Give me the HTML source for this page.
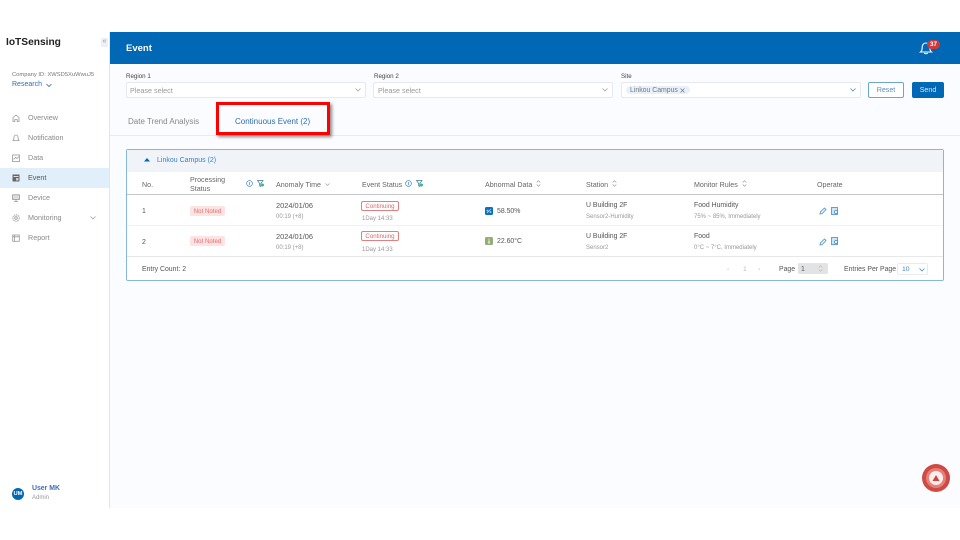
<!DOCTYPE html>
<html lang="en"><head><meta charset="utf-8"><title>IoTSensing Event</title>
<style>
html,body{margin:0;padding:0;background:#fff}
body{width:960px;height:540px;position:relative;overflow:hidden;font-family:"Liberation Sans",sans-serif;color:#555}
#w{position:absolute;left:0;top:0;width:960px;height:540px;filter:blur(.25px)}
.a{position:absolute;white-space:nowrap;margin-top:1px}
.n{margin-top:0}
.b{position:absolute;box-sizing:border-box}
.nav{font-size:7.200px;color:#8a8a8a;left:28px}
.th{font-size:7.100px;color:#666}
.td{font-size:6.900px;color:#555}
.sm{font-size:6px;color:#999}
.lab{font-size:6.200px;color:#444}
.sel{height:16px;background:#fff;border:1px solid #e6eaf0;border-radius:2px;top:82px}
.ph{font-size:7.200px;color:#999;top:85px}
svg{position:absolute;overflow:visible}
.ln{position:absolute;left:127px;width:816px;height:1px}
.nt{position:absolute;left:190px;width:35px;height:10px;background:#fde3e3;border-radius:2px;color:#e07070;font-size:6.100px;line-height:11px;text-align:center}
.ct{position:absolute;left:361px;width:38px;height:10px;border:1px solid #e08080;border-radius:2px;box-sizing:border-box;color:#d96a6a;font-size:6.100px;line-height:9px;text-align:center}
</style></head><body><div id="w">

<!-- page background -->
<div class="b" style="left:110px;top:64px;width:850px;height:444px;background:#fbfcff"></div>
<div class="b" style="left:0;top:32px;width:110px;height:476px;background:#fff;border-right:1px solid #e3e5e8"></div>
<div class="b" style="left:110px;top:32px;width:850px;height:32px;background:#0068b5"></div>
<div class="a" style="left:126px;top:42px;font-size:9.500px;font-weight:bold;color:#fff">Event</div>

<!-- bell -->
<svg style="left:919px;top:41px" width="14" height="14" viewBox="0 0 14 14" fill="none" stroke="#fff" stroke-width="1.100"><path d="M1.500 11c1.300-1 1.700-2.200 1.700-4.500C3.200 3.500 4.800 2 7 2s3.800 1.500 3.800 4.500c0 2.300.4 3.500 1.700 4.500z"/><path d="M5.300 12c.5 1 2.900 1 3.400 0"/></svg>
<div class="a n" style="left:927px;top:40px;width:13px;height:9px;border-radius:5px;background:#d13a3a;color:#fff;font-size:6.200px;font-weight:bold;line-height:9.500px;text-align:center">37</div>

<!-- sidebar -->
<div class="a" style="left:6px;top:36px;font-size:10.200px;font-weight:bold;color:#222">IoTSensing</div>
<div class="b" style="left:101px;top:38px;width:7px;height:9px;background:#eef0f3;color:#999;font-size:7px;line-height:8px;text-align:center">«</div>
<div class="a" style="left:12px;top:71px;font-size:5.800px;color:#777">Company ID: XWSD5XuWwuJ5</div>
<div class="a" style="left:12px;top:80px;font-size:7px;color:#2f6fb5">Research</div>
<svg style="left:46px;top:83px" width="6" height="5" fill="none" stroke="#2f6fb5" stroke-width=".8"><path d="M.5 1l2.500 2.500L5.500 1"/></svg>

<div class="b" style="left:0;top:168px;width:109px;height:20px;background:#e1effa"></div>
<div class="a nav" style="top:112px">Overview</div>
<div class="a nav" style="top:132px">Notification</div>
<div class="a nav" style="top:152px">Data</div>
<div class="a nav" style="top:172px;color:#555">Event</div>
<div class="a nav" style="top:192px">Device</div>
<div class="a nav" style="top:212px">Monitoring</div>
<div class="a nav" style="top:232px">Report</div>
<svg style="left:12px;top:114px" width="8" height="8" fill="none" stroke="#999" stroke-width=".8"><path d="M1 7.500V3.500L4 1l3 2.500v4H5.200V5.500H2.800v2z"/></svg>
<svg style="left:12px;top:134px" width="8" height="8" fill="none" stroke="#999" stroke-width=".8"><path d="M1 6.500c.8-.8 1-1.500 1-3C2 2 3 1 4 1s2 1 2 2.500c0 1.500.2 2.200 1 3z"/></svg>
<svg style="left:12px;top:154px" width="8" height="8" fill="none" stroke="#999" stroke-width=".8"><rect x=".5" y="1" width="7" height="6.500"/><path d="M1.500 5.500l2-2 1.500 1 2-2"/></svg>
<svg style="left:12px;top:174px" width="8" height="8"><rect x=".5" y=".5" width="7" height="7" fill="#666" rx=".5"/><rect x="1.500" y="2" width="5" height="1" fill="#ddd"/><rect x="4" y="4" width="2.500" height="2.500" fill="#ccc"/></svg>
<svg style="left:12px;top:194px" width="8" height="8" fill="none" stroke="#999" stroke-width=".8"><rect x=".5" y=".8" width="7" height="4.700" fill="#ddd"/><path d="M2 7.500h4M4 5.500v2"/></svg>
<svg style="left:12px;top:214px" width="8" height="8" fill="none" stroke="#999" stroke-width=".8"><circle cx="4" cy="4" r="3.200" stroke-dasharray="1.500 .6"/><circle cx="4" cy="4" r="1.300"/></svg>
<svg style="left:12px;top:234px" width="8" height="8" fill="none" stroke="#999" stroke-width=".8"><rect x=".7" y="1" width="6.600" height="6.300"/><path d="M2.500 1v6.300M.7 2.800h6.600"/></svg>
<svg style="left:90px;top:216px" width="6" height="4" fill="none" stroke="#999" stroke-width=".7"><path d="M.5.500l2.500 2.500L5.500.500"/></svg>

<div class="a n" style="left:12px;top:488px;width:12px;height:12px;border-radius:50%;background:#0068b5;color:#fff;font-size:5.800px;font-weight:bold;line-height:12.500px;text-align:center">UM</div>
<div class="a" style="left:32px;top:484px;font-size:6.900px;font-weight:bold;color:#3c70b0">User MK</div>
<div class="a" style="left:32px;top:494px;font-size:6px;color:#999">Admin</div>

<!-- filters -->
<div class="a lab" style="left:126px;top:72px">Region 1</div>
<div class="a lab" style="left:374px;top:72px">Region 2</div>
<div class="a lab" style="left:621px;top:72px">Site</div>
<div class="b sel" style="left:126px;width:240px"></div>
<div class="b sel" style="left:373px;width:240px"></div>
<div class="b sel" style="left:621px;width:240px"></div>
<div class="a ph" style="left:130px">Please select</div>
<div class="a ph" style="left:378px">Please select</div>
<svg style="left:355px;top:88px" width="6" height="4" fill="none" stroke="#999" stroke-width=".7"><path d="M.5.500l2.500 2.500L5.500.500"/></svg>
<svg style="left:602px;top:88px" width="6" height="4" fill="none" stroke="#999" stroke-width=".7"><path d="M.5.500l2.500 2.500L5.500.500"/></svg>
<svg style="left:850px;top:88px" width="6" height="4" fill="none" stroke="#3a7fc0" stroke-width=".7"><path d="M.5.500l2.500 2.500L5.500.500"/></svg>
<div class="a n" style="left:626px;top:85.500px;width:64px;height:8.500px;background:#e6f1fb;border-radius:4px"></div>
<div class="a" style="left:630px;top:85.500px;font-size:6.900px;color:#777">Linkou Campus</div>
<svg style="left:680px;top:87.500px" width="5" height="5" stroke="#777" stroke-width=".7"><path d="M.5.500l4 4M4.500.500l-4 4"/></svg>
<div class="b" style="left:868px;top:82px;width:36px;height:16px;border:1px solid #6ba5d8;border-radius:2px;background:#fff;color:#5b8ec0;font-size:7.100px;line-height:15px;text-align:center">Reset</div>
<div class="b" style="left:912px;top:82px;width:32px;height:16px;border-radius:2px;background:#0068b5;color:#d7e8f7;font-size:7.100px;line-height:17px;text-align:center">Send</div>

<!-- tabs -->
<div class="b" style="left:110px;top:135px;width:850px;height:1px;background:#e8eaee"></div>
<div class="a" style="left:128px;top:115.500px;font-size:8px;color:#888">Date Trend Analysis</div>
<div class="b" style="left:216px;top:102px;width:114px;height:33px;border:3px solid #f00;box-shadow:2px 2px 3px rgba(0,0,0,.45)"></div>
<div class="a" style="left:235px;top:115.500px;font-size:8px;color:#2f6fb0">Continuous Event (2)</div>

<!-- card -->
<div class="b" style="left:126px;top:149px;width:818px;height:132px;background:#fff;border:1px solid #86b8de;border-radius:2px"></div>
<div class="b" style="left:127px;top:150px;width:816px;height:22px;background:#f0f4f8"></div>
<svg style="left:144px;top:158px" width="6" height="4"><path d="M3 0l3 3.500H0z" fill="#0068b5"/></svg>
<div class="a" style="left:157px;top:155.500px;font-size:7px;color:#3d7fc0">Linkou Campus (2)</div>

<div class="a th" style="left:142px;top:179.500px">No.</div>
<div class="a th" style="left:190px;top:175px;line-height:8.500px">Processing<br>Status</div>
<div class="a th" style="left:276px;top:179.500px">Anomaly Time</div>
<div class="a th" style="left:362px;top:179.500px">Event Status</div>
<div class="a th" style="left:485px;top:179.500px">Abnormal Data</div>
<div class="a th" style="left:586px;top:179.500px">Station</div>
<div class="a th" style="left:694px;top:179.500px">Monitor Rules</div>
<div class="a th" style="left:817px;top:179.500px">Operate</div>

<svg style="left:246px;top:180px" width="7" height="7" fill="none" stroke="#3f8ccb" stroke-width=".7"><circle cx="3.500" cy="3.500" r="2.900"/><path d="M3.500 2v3"/></svg>
<svg style="left:404.500px;top:180px" width="7" height="7" fill="none" stroke="#3f8ccb" stroke-width=".7"><circle cx="3.500" cy="3.500" r="2.900"/><path d="M3.500 2v3"/></svg>
<svg style="left:257px;top:180px" width="8" height="7" fill="none" stroke="#3a7a9a" stroke-width=".7"><path d="M.5.500h5.500L3.800 3.500v3L2.700 6V3.500z"/><circle cx="5.500" cy="5" r="1.500" fill="#3cb878" stroke="none"/></svg>
<svg style="left:416px;top:180px" width="8" height="7" fill="none" stroke="#3a7a9a" stroke-width=".7"><path d="M.5.500h5.500L3.800 3.500v3L2.700 6V3.500z"/><circle cx="5.500" cy="5" r="1.500" fill="#3cb878" stroke="none"/></svg>
<svg style="left:325px;top:183px" width="5" height="3" fill="none" stroke="#999" stroke-width=".6"><path d="M.5.500L2.500 2.500 4.500.500"/></svg>
<svg style="left:536px;top:180px" width="5" height="7" fill="none" stroke="#999" stroke-width=".6"><path d="M.7 2.500L2.500.700l1.800 1.800M.7 4.500l1.800 1.800 1.800-1.800"/></svg>
<svg style="left:612px;top:180px" width="5" height="7" fill="none" stroke="#999" stroke-width=".6"><path d="M.7 2.500L2.500.700l1.800 1.800M.7 4.500l1.800 1.800 1.800-1.800"/></svg>
<svg style="left:742px;top:180px" width="5" height="7" fill="none" stroke="#999" stroke-width=".6"><path d="M.7 2.500L2.500.700l1.800 1.800M.7 4.500l1.800 1.800 1.800-1.800"/></svg>

<div class="ln" style="top:194px;height:1px;background:#c4c6c9"></div>
<div class="ln" style="top:225px;background:#f1f2f4"></div>
<div class="ln" style="top:256px;background:#e6e8eb"></div>

<!-- row 1 -->
<div class="a td" style="left:142px;top:207px">1</div>
<div class="nt" style="top:206px">Not Noted</div>
<div class="a td" style="left:276px;top:200px;font-size:7.400px">2024/01/06</div>
<div class="a sm" style="left:276px;top:213px">00:19 (+8)</div>
<div class="ct" style="top:201px">Continuing</div>
<div class="a sm" style="left:362px;top:215px">1Day 14:33</div>
<div class="b" style="left:485px;top:207px;width:8px;height:8px;background:#0d6fc0;border-radius:1.500px"></div>
<svg style="left:486px;top:208px" width="6" height="6" fill="none" stroke="#cfe6f8" stroke-width=".6"><path d="M1 5l4-4M1.500 2a.6.600 0 1 0 .01 0M4.500 3.500a.6.600 0 1 0 .01 0"/></svg>
<div class="a td" style="left:497px;top:207px">58.50%</div>
<div class="a td" style="left:586px;top:201px">U Building 2F</div>
<div class="a sm" style="left:586px;top:213px">Sensor2-Humidity</div>
<div class="a td" style="left:694px;top:200.500px">Food Humidity</div>
<div class="a sm" style="left:694px;top:213px">75% ~ 85%, Immediately</div>

<!-- row 2 -->
<div class="a td" style="left:142px;top:237.500px">2</div>
<div class="nt" style="top:236px">Not Noted</div>
<div class="a td" style="left:276px;top:230.500px;font-size:7.400px">2024/01/06</div>
<div class="a sm" style="left:276px;top:243.500px">00:19 (+8)</div>
<div class="ct" style="top:231px">Continuing</div>
<div class="a sm" style="left:362px;top:245.500px">1Day 14:33</div>
<div class="b" style="left:485px;top:237px;width:8px;height:8px;background:#93ad78;border-radius:1.500px"></div>
<svg style="left:487px;top:238px" width="4" height="6" fill="none" stroke="#e4ecd9" stroke-width=".8"><path d="M2 .5v3.500"/><circle cx="2" cy="4.500" r=".8"/></svg>
<div class="a td" style="left:497px;top:237px">22.60°C</div>
<div class="a td" style="left:586px;top:232px">U Building 2F</div>
<div class="a sm" style="left:586px;top:243.500px">Sensor2</div>
<div class="a td" style="left:694px;top:231.500px">Food</div>
<div class="a sm" style="left:694px;top:243.500px">0°C ~ 7°C, Immediately</div>

<!-- operate icons -->
<svg style="left:819px;top:207px" width="8" height="8" fill="none" stroke="#3f8ccb" stroke-width=".8"><path d="M1 7l.4-2L5.500 1 7 2.500 3 6.600z"/></svg>
<svg style="left:831px;top:207px" width="8" height="8" fill="none" stroke="#3f8ccb" stroke-width=".8"><rect x=".5" y=".5" width="6" height="7" fill="#cfe4f5"/><circle cx="5" cy="5" r="1.500" fill="#fff"/></svg>
<svg style="left:819px;top:238px" width="8" height="8" fill="none" stroke="#3f8ccb" stroke-width=".8"><path d="M1 7l.4-2L5.500 1 7 2.500 3 6.600z"/></svg>
<svg style="left:831px;top:237px" width="8" height="8" fill="none" stroke="#3f8ccb" stroke-width=".8"><rect x=".5" y=".5" width="6" height="7" fill="#cfe4f5"/><circle cx="5" cy="5" r="1.500" fill="#fff"/></svg>

<!-- footer -->
<div class="a td" style="left:142px;top:264.500px">Entry Count: 2</div>
<div class="a" style="left:727px;top:264.500px;font-size:6.800px;color:#ccc">‹</div>
<div class="a" style="left:743px;top:264.500px;font-size:6.800px;color:#bbb">1</div>
<div class="a" style="left:758px;top:264.500px;font-size:6.800px;color:#ccc">›</div>
<div class="a td" style="left:779px;top:264.500px">Page</div>
<div class="b" style="left:798px;top:263px;width:30px;height:11px;background:#e2e3e5;border-radius:1.500px"></div>
<div class="a td" style="left:801px;top:264.500px">1</div>
<svg style="left:818px;top:265px" width="5" height="7" fill="none" stroke="#bbb" stroke-width=".6"><path d="M.7 2.500L2.500.700l1.800 1.800M.7 4.500l1.800 1.800 1.800-1.800"/></svg>
<div class="a td" style="left:844px;top:264.500px">Entries Per Page</div>
<div class="b" style="left:897px;top:263px;width:31px;height:12px;background:#fff;border:1px solid #e8ebef;border-radius:2px"></div>
<div class="a" style="left:902px;top:264.500px;font-size:6.800px;color:#3f86c6">10</div>
<svg style="left:919px;top:267.500px" width="6" height="4" fill="none" stroke="#3a7fc0" stroke-width=".7"><path d="M.5.500l2.500 2.500L5.500.500"/></svg>

<!-- floating -->
<svg style="left:922px;top:464px" width="28" height="28"><circle cx="14" cy="14" r="14" fill="#cf4a45"/><circle cx="14" cy="14" r="10" fill="#e87f78"/><circle cx="14" cy="14" r="7" fill="#fbeeee"/><path d="M14 11l3.500 6h-7z" fill="#d2423e"/></svg>

</div></body></html>
